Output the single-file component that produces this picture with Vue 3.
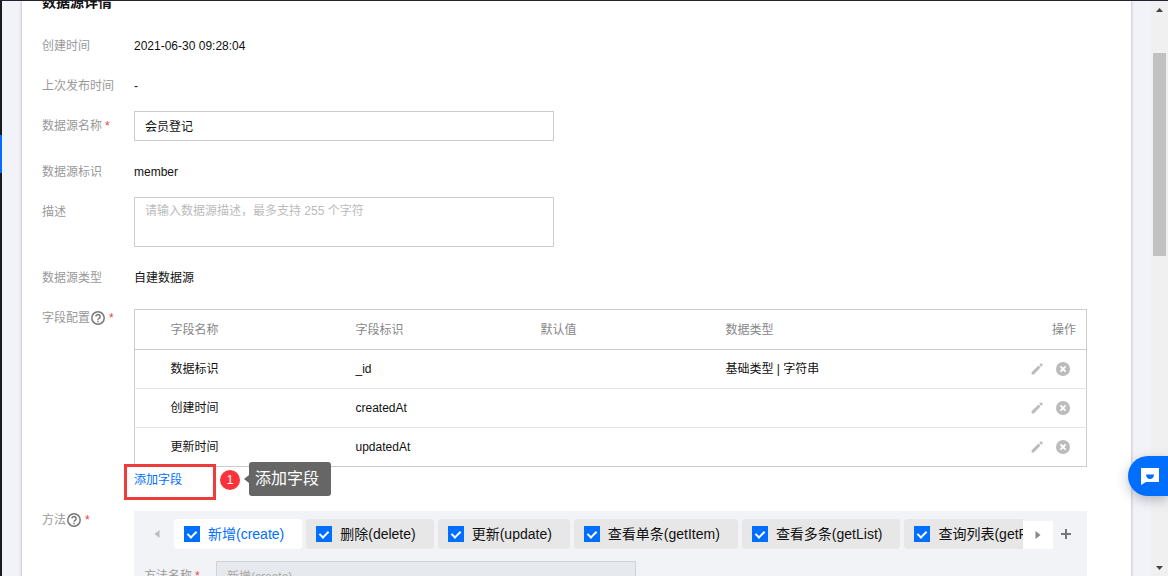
<script setup>
import { ref } from 'vue'

const name = ref('会员登记')
const description = ref('')

const fields = [
  { name: '数据标识', key: '_id', initial: '', type: '基础类型 | 字符串' },
  { name: '创建时间', key: 'createdAt', initial: '', type: '' },
  { name: '更新时间', key: 'updatedAt', initial: '', type: '' },
]

const methods = ref([
  { id: 'create', label: '新增(create)', checked: true },
  { id: 'delete', label: '删除(delete)', checked: true },
  { id: 'update', label: '更新(update)', checked: true },
  { id: 'getItem', label: '查看单条(getItem)', checked: true },
  { id: 'getList', label: '查看多条(getList)', checked: true },
  { id: 'getPage', label: '查询列表(getPage)', checked: true },
])
const active = ref('create')
</script>

<template>
  <div class="app">
    <div class="topbar"></div>
    <div class="body">
      <nav class="rail"><div class="rail-active"></div></nav>
      <main class="main">
        <section class="card">
          <h2 class="title">数据源详情</h2>

          <div class="form">
            <div class="row">
              <span class="label">创建时间</span>
              <span class="value">2021-06-30 09:28:04</span>
            </div>
            <div class="row">
              <span class="label">上次发布时间</span>
              <span class="value">-</span>
            </div>
            <div class="row spaced">
              <label class="label" for="ds-name">数据源名称<i class="star">*</i></label>
              <input id="ds-name" v-model="name" class="input" type="text" />
            </div>
            <div class="row">
              <span class="label">数据源标识</span>
              <span class="value">member</span>
            </div>
            <div class="row spaced">
              <label class="label" for="ds-desc">描述</label>
              <textarea id="ds-desc" v-model="description" class="input area" placeholder="请输入数据源描述，最多支持 255 个字符"></textarea>
            </div>
            <div class="row spaced">
              <span class="label">数据源类型</span>
              <span class="value">自建数据源</span>
            </div>

            <div class="row fields-row">
              <span class="label compact">字段配置<svg class="help" viewBox="0 0 14 14"><circle cx="7" cy="7" r="6.2" /><path d="M4.9 5.6a2.1 2.1 0 1 1 3.3 1.7C7.4 7.8 7 8 7 8.8" /><path d="M7 9.8v1.4" /></svg><i class="star far">*</i></span>
              <div class="content">
                <table class="table">
                  <colgroup>
                    <col class="c-pad" /><col class="c-data" /><col class="c-data" /><col class="c-data" /><col />
                    <col class="c-act" />
                  </colgroup>
                  <thead>
                    <tr>
                      <th></th>
                      <th>字段名称</th>
                      <th>字段标识</th>
                      <th>默认值</th>
                      <th>数据类型</th>
                      <th class="right">操作</th>
                    </tr>
                  </thead>
                  <tbody>
                    <tr v-for="f in fields" :key="f.key">
                      <td></td>
                      <td>{{ f.name }}</td>
                      <td>{{ f.key }}</td>
                      <td>{{ f.initial }}</td>
                      <td>{{ f.type }}</td>
                      <td>
                        <div class="actions">
                          <button class="icon-btn" type="button" aria-label="编辑">
                            <svg viewBox="0 0 14 14"><path d="M1.6 12.4v-2.2l6.9-6.6 2 2-6.7 6.8zM9.3 2.8l1.3-1.3q.4-.3.8 0l1.1 1.1q.4.4 0 .8l-1.2 1.4z" /></svg>
                          </button>
                          <button class="icon-btn" type="button" aria-label="删除">
                            <svg viewBox="0 0 14 14"><circle cx="7" cy="7" r="7" /><path class="cross" d="M4.4 4.4l5.2 5.2M9.6 4.4L4.4 9.6" /></svg>
                          </button>
                        </div>
                      </td>
                    </tr>
                  </tbody>
                </table>
                <div class="add">
                  <a class="link" href="#">添加字段</a>
                  <div class="guide">
                    <span class="frame"></span>
                    <span class="badge">1</span>
                    <span class="tip">添加字段</span>
                  </div>
                </div>
              </div>
            </div>

            <div class="row">
              <span class="label compact">方法<svg class="help" viewBox="0 0 14 14"><circle cx="7" cy="7" r="6.2" /><path d="M4.9 5.6a2.1 2.1 0 1 1 3.3 1.7C7.4 7.8 7 8 7 8.8" /><path d="M7 9.8v1.4" /></svg><i class="star far">*</i></span>
              <div class="content panel">
                <div class="tabbar">
                  <button class="arrow prev" type="button" aria-label="向左"><svg viewBox="0 0 6 8"><path d="M5.5 0v8L.5 4z" /></svg></button>
                  <div class="tabs">
                    <div v-for="m in methods" :key="m.id" class="tab" :class="{ on: m.id === active }" @click="active = m.id">
                      <input :id="'m-' + m.id" v-model="m.checked" class="check" type="checkbox" />
                      <label :for="'m-' + m.id">{{ m.label }}</label>
                    </div>
                  </div>
                  <button class="arrow next" type="button" aria-label="向右"><svg viewBox="0 0 6 8"><path d="M.5 0v8l5-4z" /></svg></button>
                  <button class="plus" type="button" aria-label="添加方法"><svg viewBox="0 0 10 10"><path d="M5 0v10M0 5h10" /></svg></button>
                </div>
                <div class="method">
                  <label class="method-label" for="m-name">方法名称<i class="star">*</i></label>
                  <input id="m-name" class="input disabled" type="text" value="新增(create)" disabled />
                </div>
              </div>
            </div>
          </div>
        </section>
      </main>
      <div class="scrollbar">
        <svg class="sb-arrow" viewBox="0 0 7 4"><path d="M3.5 0L7 4H0z" /></svg>
        <div class="track"><div class="thumb"></div></div>
        <svg class="sb-arrow" viewBox="0 0 7 4"><path d="M3.5 4L7 0H0z" /></svg>
      </div>
    </div>
    <button class="chat" type="button" aria-label="在线客服">
      <svg viewBox="0 0 18 17"><path fill="#fff" d="M0 0h18v14H5L0 17z" /><path fill="#006eff" d="M5 6.5h8a4 4.5 0 0 1-8 0z" /></svg>
    </button>
  </div>
</template>

<style>
body {
  overflow: hidden;
}
</style>

<style scoped>
.app,
.app *,
.app *::before,
.app *::after {
  box-sizing: border-box;
}

.app {
  display: flex;
  flex-direction: column;
  height: 100vh;
  overflow: hidden;
  background: #f2f3f8;
  color: #111;
  font: 12px/20px "Liberation Sans", "Noto Sans CJK SC", sans-serif;
}

button,
input,
textarea {
  margin: 0;
  padding: 0;
  border: 0;
  background: none;
  color: inherit;
  font: inherit;
}

.topbar {
  flex: 0 0 1px;
  background: #242131;
}

.body {
  display: flex;
  flex: 1;
  min-height: 0;
}

.rail {
  width: 2px;
  padding-top: 134px;
  background: #181922;
}

.rail-active {
  height: 38px;
  background: #006eff;
}

.main {
  flex: 1;
  min-width: 0;
  padding: 0 20px;
  overflow: hidden;
}

.card {
  min-height: 100%;
  padding: 0 44px 20px 20px;
  background: #fff;
  box-shadow: 0 0 3px rgba(54, 58, 80, 0.4);
}

.title {
  height: 20px;
  margin: -9px 0 0;
  font-size: 14px;
  font-weight: 700;
  line-height: 20px;
}

.card::before {
  content: "";
  display: table;
}

.form {
  padding-top: 19px;
}

.row {
  display: flex;
  margin-bottom: 10px;
}

.row.spaced {
  margin-bottom: 16px;
}

.row.fields-row {
  margin-bottom: 11px;
}

.label {
  flex: 0 0 92px;
  color: #999;
  line-height: 30px;
  white-space: nowrap;
}

.label.compact {
  display: flex;
  align-items: center;
  height: 18px;
  line-height: 18px;
}

.star {
  margin-left: 3px;
  color: #e54545;
  font-style: normal;
}

.star.far {
  margin-left: 4px;
}

.help {
  width: 14px;
  height: 14px;
  margin-left: 1px;
  fill: none;
  stroke: #777;
  stroke-width: 1.5;
}

.value {
  line-height: 30px;
}

.content {
  flex: 1;
  min-width: 0;
}

.input {
  width: 420px;
  height: 30px;
  padding: 0 10px 2px;
  border: 1px solid #ccc;
  background: #fff;
}

.area {
  height: 50px;
  padding-top: 3px;
  line-height: 20px;
  resize: none;
}

.area::placeholder {
  color: #bbb;
}

.table {
  width: 100%;
  table-layout: fixed;
  border: 1px solid #ccc;
  border-collapse: collapse;
}

.c-pad {
  width: 26px;
}

.c-data {
  width: 185px;
}

.c-act {
  width: 80px;
}

th,
td {
  height: 39px;
  padding: 0 10px;
  text-align: left;
  border-bottom: 1px solid #e5e5e5;
}

th {
  height: 40px;
  color: #888;
  font-weight: 400;
  border-bottom-color: #ccc;
}

tbody tr:last-child td {
  border-bottom-color: #ccc;
}

th.right {
  text-align: right;
}

.actions {
  display: flex;
  justify-content: flex-end;
  gap: 12px;
  padding-right: 6px;
}

.icon-btn {
  display: block;
  width: 14px;
  height: 14px;
}

.icon-btn svg {
  display: block;
  fill: #bbb;
}

.cross {
  stroke: #fff;
  stroke-width: 2;
}

.add {
  position: relative;
  padding-top: 3px;
  height: 33px;
}

.link {
  color: #006eff;
  text-decoration: none;
}

.guide {
  position: absolute;
  top: -5px;
  left: -10px;
  display: flex;
  align-items: center;
  pointer-events: none;
}

.frame {
  align-self: flex-end;
  width: 92px;
  height: 36px;
  margin-top: 2px;
  border: 3px solid #ee3c3c;
}

.badge {
  width: 20px;
  height: 20px;
  margin: 0 9px 2px 4px;
  border-radius: 50%;
  background: #fa3239;
  color: #fff;
  line-height: 20px;
  text-align: center;
}

.tip {
  position: relative;
  height: 34px;
  margin-bottom: 4px;
  padding: 0 12px 0 6px;
  border-radius: 3px;
  background: #666;
  color: #fff;
  font-size: 16px;
  line-height: 34px;
}

.tip::before {
  content: "";
  position: absolute;
  top: 13px;
  left: -5px;
  border: solid transparent;
  border-width: 4px 5px 4px 0;
  border-right-color: #666;
}

.panel {
  padding-top: 8px;
  background: #f2f3f7;
}

.tabbar {
  display: flex;
  height: 30px;
  padding-left: 10px;
}

.arrow {
  display: flex;
  align-items: center;
  justify-content: center;
  flex: 0 0 30px;
}

.arrow svg {
  width: 6px;
  height: 8px;
  fill: #bbb;
}

.arrow.prev {
  padding-right: 4px;
}

.arrow.next {
  margin-top: 2px;
  background: #fff;
}

.arrow.next svg {
  fill: #888;
}

.tabs {
  display: flex;
  flex: 1;
  min-width: 0;
  gap: 4px;
  overflow: hidden;
}

.tab {
  display: flex;
  flex: none;
  align-items: center;
  gap: 8px;
  padding: 0 18px 0 10px;
  border-radius: 4px;
  background: #e7e7e7;
  font-size: 14px;
  white-space: nowrap;
}

.tab.on {
  background: #fff;
  color: #006eff;
}

.check {
  position: relative;
  width: 16px;
  height: 16px;
  appearance: none;
  border: 1px solid #006eff;
}

.check:checked {
  background: #006eff;
}

.check:checked::after {
  content: "";
  position: absolute;
  top: 2px;
  left: 4px;
  width: 6px;
  height: 9px;
  border: solid #fff;
  border-width: 0 2px 2px 0;
  transform: rotate(45deg);
}

.plus {
  display: flex;
  align-items: center;
  justify-content: center;
  flex: 0 0 26px;
  margin-right: 8px;
}

.plus svg {
  width: 10px;
  height: 10px;
  stroke: #777;
  stroke-width: 2;
}

.method {
  display: flex;
  margin-top: 12px;
  padding: 0 10px 20px;
}

.method-label {
  flex: 0 0 72px;
  color: #999;
  line-height: 30px;
}

.input.disabled {
  border-color: #d0d3d8;
  background: #e6e9ed;
  color: #aaa;
}

.scrollbar {
  display: flex;
  flex-direction: column;
  align-items: center;
  justify-content: space-between;
  width: 17px;
  padding: 7px 0 6px;
  background: #f0f0f0;
}

.sb-arrow {
  width: 7px;
  height: 4px;
  fill: #444;
}

.track {
  flex: 1;
  width: 13px;
  padding-top: 41px;
}

.thumb {
  height: 39%;
  min-height: 203px;
  background: #c1c1c1;
}

.chat {
  position: absolute;
  right: 0;
  bottom: 80px;
  display: flex;
  align-items: center;
  width: 40px;
  height: 40px;
  padding-left: 13px;
  border-radius: 20px 0 0 20px;
  background: #006eff;
  box-shadow: 0 4px 12px rgba(54, 58, 80, 0.32);
}

.chat svg {
  width: 18px;
  height: 17px;
}
</style>
